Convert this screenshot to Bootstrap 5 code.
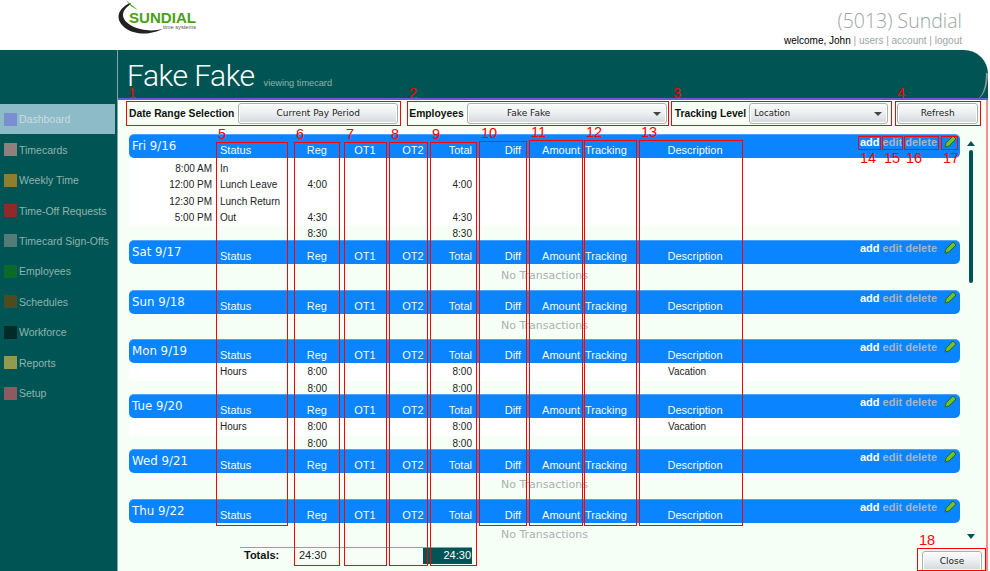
<!DOCTYPE html>
<html lang="en">
<head>
<meta charset="utf-8">
<title>Sundial timecard</title>
<link rel="stylesheet" href="https://cdn.jsdelivr.net/npm/bootstrap@5.3.0/dist/css/bootstrap.min.css">
<style>
html,body{margin:0;height:571px;overflow:hidden;background:#fff}
body{font-family:"DejaVu Sans","Liberation Sans",sans-serif;font-size:9px;color:#222;position:relative}
.sd-top{height:50px;padding-left:117px;width:990px}
.sd-logo{width:84px;height:36px;display:block}
.sd-logo .l1{font:bold 15.5px "Liberation Sans",sans-serif;fill:#48a012}
.sd-logo .l2{font:5.6px "Liberation Sans",sans-serif;fill:#555}
.sd-acct{padding:8px 28px 0 0;text-align:right}
.sd-co{font:300 19.5px/26px "Open Sans",sans-serif;color:#9aa5a5}
.sd-links{font:10px/14px "Liberation Sans",sans-serif;color:#000}
.sd-links a{color:#9aa5a5;text-decoration:none}
.sd-links i{font-style:normal;color:#9aa5a5}
.sd-app{height:521px;width:988px}
.sd-side{width:118px;background:#005454;border-right:1px solid #7fa9a9;padding-top:54px;flex:none}
.sd-item{height:30.45px;width:115px;padding-left:4px;color:#8fb5ae;font:10.5px "Liberation Sans",sans-serif;text-decoration:none}
.sd-item.on{background:#8ebbc8;color:#c9dde0}
.sd-sq{width:13px;height:13px;margin-right:2px;flex:none}
.c1{background:#7b8fd0}.c2{background:#917f7f}.c3{background:#8e7f30}.c4{background:#8e2a2a}.c5{background:#557b78}
.c6{background:#0a6a2a}.c7{background:#4f4b20}.c8{background:#022a28}.c9{background:#929a50}.c10{background:#8e5a60}
.sd-main{min-width:0}
.sd-lower{background:#f6fff6;border-right:2px solid #ff8a8a;min-height:0}
.sd-band{height:50px;flex:none;background:#005454;border-bottom:2px solid #6a5acd;border-top-right-radius:24px;padding:0 0 10px 9px;color:#fff;position:relative;overflow:hidden}
.sd-band::after{content:"";position:absolute;right:0;bottom:-1px;width:12px;height:26px;border-right:2px solid #8a9a9a;border-bottom-right-radius:12px 26px}
.sd-title{font:300 30px/22px Roboto,sans-serif;letter-spacing:-.5px}
.sd-sub{font:9.2px "Liberation Sans",sans-serif;letter-spacing:0;color:#8fb5ae;margin-left:9px}
.sd-tools{height:34px;flex:none;padding:3px 0 0 11px}
.sd-lab{font:bold 10.3px/21px "Liberation Sans",sans-serif;color:#111;white-space:nowrap}
.sd-btn{height:21px;padding:0 4px;font-size:9px;line-height:19px;color:#222;border:1px solid #a9b1b5;border-radius:3px;background:linear-gradient(#fafbfb,#eceff0 50%,#d3d7da);box-shadow:inset 0 0 0 1px #fff;white-space:nowrap}
.sd-w1{width:160px;margin-left:4px;margin-right:11px}
.sd-w2{width:200px;margin-left:3px;margin-right:8px;padding-right:80px;position:relative}
.sd-w3{width:139px;margin-left:3px;margin-right:9px;text-align:left;position:relative;font-size:8.5px}
.sd-w4{width:81px}
.sd-caret{position:absolute;right:5px;top:8px;width:0;height:0;border:4px solid transparent;border-top:4px solid #444;border-bottom:0}
.sd-body{padding-left:11px;flex:none}
.sd-days{width:831px;flex:none}
.sd-grid{display:grid;grid-template-columns:87px 75px 47px 54px 42px 38px 49px 59px 60px 110px 1fr}
.sd-head{height:24px;background:#0a84ff;color:#f4faff;border-radius:5px;border-top:1px solid #4da3ff;font:11px "Liberation Sans",sans-serif}
.sd-date{font:11.8px/14px "DejaVu Sans",sans-serif;padding:4px 0 0 3px;white-space:nowrap;align-self:start}
.sd-head>span{align-self:end;line-height:13px;padding-bottom:1px}
.sd-head>.sd-acts{align-self:start;padding:0 3px 0 0;line-height:13px}
.sd-acts{font-weight:700;font-size:11px;color:#fff;white-space:nowrap}
.sd-acts b{color:#a9b4bf}
.sd-acts svg{margin-left:7px;vertical-align:-2px}
.tl{text-align:left;padding-left:4px}
.sd-grid>.pr{text-align:right;padding-right:11px}
.tr{text-align:right}
.tc{text-align:center}
.trk{padding-left:5px}
.desc{padding-left:28px}
.sd-rows{background:#fff;padding-top:3px}
.sd-row,.sd-tot{font:10px "Liberation Sans",sans-serif}
.sd-row{height:16.25px;line-height:16px}
.sd-row>.tm{text-align:right;padding-right:4px}
.sd-rows.sd-one{padding-top:0}
.sd-one .sd-row{height:18px;line-height:18px}
.sd-tot{line-height:15px;height:14px}
.sd-tot.h13{height:13px}
.sd-none{height:25.5px;line-height:24px;text-align:center;color:#aab0b0;font-size:11px}
.sd-none.h26{height:26px}
.sd-none.h24{height:24px}
.sd-bar{width:8px;margin-left:7px;height:405px;padding-top:7px}
.sd-up{width:0;height:0;border:4px solid transparent;border-bottom:5px solid #005454;border-top:0}
.sd-thumb{width:4px;height:133px;background:#005454;border-radius:2px;margin-top:4px}
.sd-dn{width:0;height:0;border:4px solid transparent;border-top:5px solid #005454;border-bottom:0;margin-top:auto}
.sd-foot{padding-left:122px;height:24px;flex:none}
.sd-totals{width:232px;height:17px;border-top:1px solid #7fa9a9;font:11px/15px "Liberation Sans",sans-serif}
.sd-totals b{width:55px;padding-left:4px;color:#111}
.sd-totals .v{width:128px;padding-left:4px}
.sd-totals .d{width:49px;background:#005454;color:#fff;text-align:right;padding-right:1px}
.sd-close{width:60px;height:20px;margin-left:450px;line-height:18px;border-radius:3px 3px 0 0}
.ann{position:absolute;border:1px solid #f00;pointer-events:none}
.ann>span{position:absolute;left:1px;top:-14px;color:#f00;font:14.5px/10px "Liberation Sans",sans-serif;white-space:nowrap}
.ann.u>span{top:16px}
.a1{left:126px;top:101px;width:275px;height:25px}
.a2{left:407px;top:101px;width:262px;height:25px}
.a3{left:671px;top:101px;width:221px;height:25px}
.a4{left:895px;top:101px;width:86px;height:25px}
.a5{left:216px;top:142px;width:72px;height:384px}
.a6{left:294px;top:142px;width:46px;height:424px}
.a7{left:344px;top:142px;width:43px;height:424px}
.a8{left:389px;top:142px;width:39px;height:424px}
.a9{left:430px;top:142px;width:47px;height:424px}
.a10{left:479px;top:141px;width:48px;height:385px}
.a11{left:529px;top:140px;width:54px;height:386px}
.a12{left:584px;top:140px;width:53px;height:386px}
.a13{left:639px;top:140px;width:104px;height:386px}
.a14{left:858px;top:136px;width:23px;height:14px}
.a15{left:882px;top:136px;width:21px;height:14px}
.a16{left:904px;top:136px;width:35px;height:14px}
.a17{left:941px;top:136px;width:17px;height:14px}
.a18{left:917px;top:548px;width:69px;height:23px}
</style>
</head>
<body>
<header class="sd-top d-flex justify-content-between">
  <svg class="sd-logo" viewBox="0 0 84 36" role="img" aria-label="Sundial logo">
    <path d="M13 3C2 8-2 17 5 25c6 7 18 10 28 8 4-1 9-2 13-4-6 1-11 2-17 1C17 29 6 22 6 15c0-4 3-8 8-11z" fill="#222"/>
    <path d="M9 0c3 3 7 6 12 10-5-2-9-5-12-10z" fill="#48a012"/>
    <text class="l1" x="12" y="23" textLength="67" lengthAdjust="spacingAndGlyphs">SUNDIAL</text>
    <text class="l2" x="46" y="29" textLength="33" lengthAdjust="spacingAndGlyphs">time systems</text>
  </svg>
  <div class="sd-acct">
    <div class="sd-co">(5013) Sundial</div>
    <div class="sd-links">welcome, John <i>|</i> <a href="#">users</a> <i>|</i> <a href="#">account</a> <i>|</i> <a href="#">logout</a></div>
  </div>
</header>
<div class="sd-app d-flex">
  <nav class="sd-side d-flex flex-column">
    <a href="#" class="sd-item on d-flex align-items-center"><span class="sd-sq c1"></span>Dashboard</a>
    <a href="#" class="sd-item d-flex align-items-center"><span class="sd-sq c2"></span>Timecards</a>
    <a href="#" class="sd-item d-flex align-items-center"><span class="sd-sq c3"></span>Weekly Time</a>
    <a href="#" class="sd-item d-flex align-items-center"><span class="sd-sq c4"></span>Time-Off Requests</a>
    <a href="#" class="sd-item d-flex align-items-center"><span class="sd-sq c5"></span>Timecard Sign-Offs</a>
    <a href="#" class="sd-item d-flex align-items-center"><span class="sd-sq c6"></span>Employees</a>
    <a href="#" class="sd-item d-flex align-items-center"><span class="sd-sq c7"></span>Schedules</a>
    <a href="#" class="sd-item d-flex align-items-center"><span class="sd-sq c8"></span>Workforce</a>
    <a href="#" class="sd-item d-flex align-items-center"><span class="sd-sq c9"></span>Reports</a>
    <a href="#" class="sd-item d-flex align-items-center"><span class="sd-sq c10"></span>Setup</a>
  </nav>
  <main class="sd-main flex-grow-1 d-flex flex-column">
    <div class="sd-band d-flex align-items-end">
      <h1 class="sd-title m-0 d-flex align-items-baseline">Fake Fake<span class="sd-sub">viewing timecard</span></h1>
    </div>
    <div class="sd-lower flex-grow-1 d-flex flex-column">
    <div class="sd-tools d-flex align-items-start">
      <span class="sd-lab">Date Range Selection</span>
      <button type="button" class="btn sd-btn sd-w1">Current Pay Period</button>
      <span class="sd-lab">Employees</span>
      <button type="button" class="btn sd-btn sd-w2">Fake Fake<span class="sd-caret"></span></button>
      <span class="sd-lab">Tracking Level</span>
      <button type="button" class="btn sd-btn sd-w3">Location<span class="sd-caret"></span></button>
      <button type="button" class="btn sd-btn sd-w4">Refresh</button>
    </div>
    <div class="sd-body d-flex">
      <div class="sd-days">

        <div class="sd-grid sd-head"><div class="sd-date">Fri 9/16</div><span class="tl">Status</span><span class="pr">Reg</span><span class="tc">OT1</span><span class="tc">OT2</span><span class="tr">Total</span><span class="tr">Diff</span><span class="tr">Amount</span><span class="trk">Tracking</span><span class="tc">Description</span><span class="sd-acts tr">add <b>edit</b> <b>delete</b><svg width="13" height="13" viewBox="0 0 13 13"><path d="M1 12l1-4 7-7 3 3-7 7z" fill="#6fc22c" stroke="#2c6a18"/></svg></span></div>
        <div class="sd-rows">
          <div class="sd-grid sd-row"><span class="tm">8:00 AM</span><span class="tl">In</span></div>
          <div class="sd-grid sd-row"><span class="tm">12:00 PM</span><span class="tl">Lunch Leave</span><span class="pr">4:00</span><span></span><span></span><span class="tr">4:00</span></div>
          <div class="sd-grid sd-row"><span class="tm">12:30 PM</span><span class="tl">Lunch Return</span></div>
          <div class="sd-grid sd-row"><span class="tm">5:00 PM</span><span class="tl">Out</span><span class="pr">4:30</span><span></span><span></span><span class="tr">4:30</span></div>
        </div>
        <div class="sd-grid sd-tot"><span></span><span></span><span class="pr">8:30</span><span></span><span></span><span class="tr">8:30</span></div>

        <div class="sd-grid sd-head"><div class="sd-date">Sat 9/17</div><span class="tl">Status</span><span class="pr">Reg</span><span class="tc">OT1</span><span class="tc">OT2</span><span class="tr">Total</span><span class="tr">Diff</span><span class="tr">Amount</span><span class="trk">Tracking</span><span class="tc">Description</span><span class="sd-acts tr">add <b>edit</b> <b>delete</b><svg width="13" height="13" viewBox="0 0 13 13"><path d="M1 12l1-4 7-7 3 3-7 7z" fill="#6fc22c" stroke="#2c6a18"/></svg></span></div>
        <div class="sd-none">No Transactions</div>

        <div class="sd-grid sd-head"><div class="sd-date">Sun 9/18</div><span class="tl">Status</span><span class="pr">Reg</span><span class="tc">OT1</span><span class="tc">OT2</span><span class="tr">Total</span><span class="tr">Diff</span><span class="tr">Amount</span><span class="trk">Tracking</span><span class="tc">Description</span><span class="sd-acts tr">add <b>edit</b> <b>delete</b><svg width="13" height="13" viewBox="0 0 13 13"><path d="M1 12l1-4 7-7 3 3-7 7z" fill="#6fc22c" stroke="#2c6a18"/></svg></span></div>
        <div class="sd-none">No Transactions</div>

        <div class="sd-grid sd-head"><div class="sd-date">Mon 9/19</div><span class="tl">Status</span><span class="pr">Reg</span><span class="tc">OT1</span><span class="tc">OT2</span><span class="tr">Total</span><span class="tr">Diff</span><span class="tr">Amount</span><span class="trk">Tracking</span><span class="tc">Description</span><span class="sd-acts tr">add <b>edit</b> <b>delete</b><svg width="13" height="13" viewBox="0 0 13 13"><path d="M1 12l1-4 7-7 3 3-7 7z" fill="#6fc22c" stroke="#2c6a18"/></svg></span></div>
        <div class="sd-rows sd-one">
          <div class="sd-grid sd-row"><span></span><span class="tl">Hours</span><span class="pr">8:00</span><span></span><span></span><span class="tr">8:00</span><span></span><span></span><span></span><span class="desc">Vacation</span></div>
        </div>
        <div class="sd-grid sd-tot h13"><span></span><span></span><span class="pr">8:00</span><span></span><span></span><span class="tr">8:00</span></div>

        <div class="sd-grid sd-head"><div class="sd-date">Tue 9/20</div><span class="tl">Status</span><span class="pr">Reg</span><span class="tc">OT1</span><span class="tc">OT2</span><span class="tr">Total</span><span class="tr">Diff</span><span class="tr">Amount</span><span class="trk">Tracking</span><span class="tc">Description</span><span class="sd-acts tr">add <b>edit</b> <b>delete</b><svg width="13" height="13" viewBox="0 0 13 13"><path d="M1 12l1-4 7-7 3 3-7 7z" fill="#6fc22c" stroke="#2c6a18"/></svg></span></div>
        <div class="sd-rows sd-one">
          <div class="sd-grid sd-row"><span></span><span class="tl">Hours</span><span class="pr">8:00</span><span></span><span></span><span class="tr">8:00</span><span></span><span></span><span></span><span class="desc">Vacation</span></div>
        </div>
        <div class="sd-grid sd-tot h13"><span></span><span></span><span class="pr">8:00</span><span></span><span></span><span class="tr">8:00</span></div>

        <div class="sd-grid sd-head"><div class="sd-date">Wed 9/21</div><span class="tl">Status</span><span class="pr">Reg</span><span class="tc">OT1</span><span class="tc">OT2</span><span class="tr">Total</span><span class="tr">Diff</span><span class="tr">Amount</span><span class="trk">Tracking</span><span class="tc">Description</span><span class="sd-acts tr">add <b>edit</b> <b>delete</b><svg width="13" height="13" viewBox="0 0 13 13"><path d="M1 12l1-4 7-7 3 3-7 7z" fill="#6fc22c" stroke="#2c6a18"/></svg></span></div>
        <div class="sd-none h26">No Transactions</div>

        <div class="sd-grid sd-head"><div class="sd-date">Thu 9/22</div><span class="tl">Status</span><span class="pr">Reg</span><span class="tc">OT1</span><span class="tc">OT2</span><span class="tr">Total</span><span class="tr">Diff</span><span class="tr">Amount</span><span class="trk">Tracking</span><span class="tc">Description</span><span class="sd-acts tr">add <b>edit</b> <b>delete</b><svg width="13" height="13" viewBox="0 0 13 13"><path d="M1 12l1-4 7-7 3 3-7 7z" fill="#6fc22c" stroke="#2c6a18"/></svg></span></div>
        <div class="sd-none h24">No Transactions</div>
      </div>
      <div class="sd-bar d-flex flex-column align-items-center">
        <span class="sd-up"></span>
        <span class="sd-thumb"></span>
        <span class="sd-dn"></span>
      </div>
    </div>
    <div class="sd-foot d-flex align-items-end">
      <div class="sd-totals d-flex align-self-start">
        <b>Totals:</b><span class="v">24:30</span><span class="d">24:30</span>
      </div>
      <button type="button" class="btn sd-btn sd-close">Close</button>
    </div>
    </div>
  </main>
</div>

<div class="ann a1"><span>1</span></div>
<div class="ann a2"><span>2</span></div>
<div class="ann a3"><span>3</span></div>
<div class="ann a4"><span>4</span></div>
<div class="ann a5"><span>5</span></div>
<div class="ann a6"><span>6</span></div>
<div class="ann a7"><span>7</span></div>
<div class="ann a8"><span>8</span></div>
<div class="ann a9"><span>9</span></div>
<div class="ann a10"><span>10</span></div>
<div class="ann a11"><span>11</span></div>
<div class="ann a12"><span>12</span></div>
<div class="ann a13"><span>13</span></div>
<div class="ann a14 u"><span>14</span></div>
<div class="ann a15 u"><span>15</span></div>
<div class="ann a16 u"><span>16</span></div>
<div class="ann a17 u"><span>17</span></div>
<div class="ann a18"><span>18</span></div>
<script src="https://cdn.jsdelivr.net/npm/bootstrap@5.3.0/dist/js/bootstrap.bundle.min.js"></script>
</body>
</html>
